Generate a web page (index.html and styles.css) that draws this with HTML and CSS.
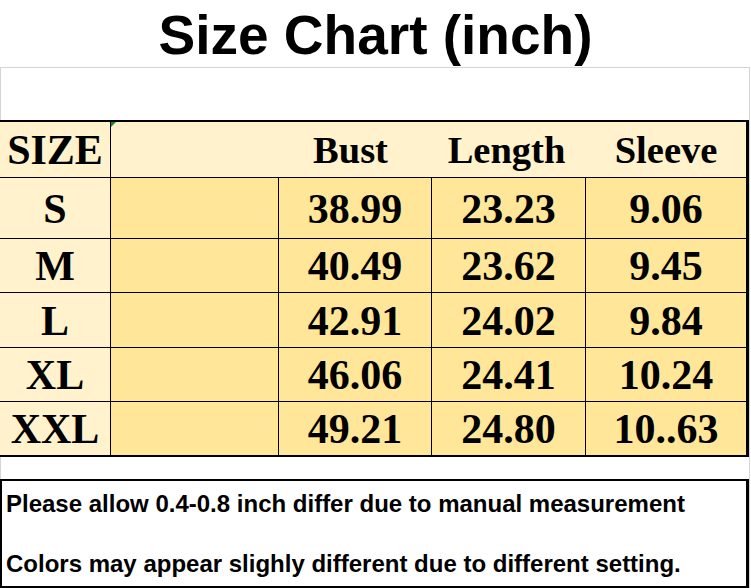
FILE: index.html
```html
<!DOCTYPE html>
<html>
<head>
<meta charset="utf-8">
<link rel="stylesheet" href="styles.css">
</head>
<body>
<h1 class="title">Size Chart (inch)</h1>
<div class="sheet">
  <div class="blank"></div>
  <div class="chart">
    <div class="c hd size-col">SIZE</div>
    <div class="c hd nb note-cell"><span class="flag"></span></div>
    <div class="c hd nb h-bust">Bust</div>
    <div class="c hd nb h-length">Length</div>
    <div class="c hd nb last">Sleeve</div>

    <div class="c size-col">S</div><div class="c d"></div><div class="c d">38.99</div><div class="c d">23.23</div><div class="c d last">9.06</div>
    <div class="c size-col">M</div><div class="c d"></div><div class="c d">40.49</div><div class="c d">23.62</div><div class="c d last">9.45</div>
    <div class="c size-col">L</div><div class="c d"></div><div class="c d">42.91</div><div class="c d">24.02</div><div class="c d last">9.84</div>
    <div class="c size-col">XL</div><div class="c d"></div><div class="c d">46.06</div><div class="c d">24.41</div><div class="c d last">10.24</div>
    <div class="c size-col br">XXL</div><div class="c d br"></div><div class="c d br">49.21</div><div class="c d br">24.80</div><div class="c d last br">10..63</div>
  </div>
  <div class="gap"></div>
  <div class="notes">
    <p class="n1">Please allow 0.4-0.8 inch differ due to manual measurement</p>
    <p class="n2">Colors may appear slighly different due to different setting.</p>
  </div>
</div>
</body>
</html>
```
FILE: styles.css
```css
html, body {
  margin: 0;
  padding: 0;
  background: #ffffff;
}
body {
  width: 751px;
  height: 588px;
  overflow: hidden;
}
.title {
  margin: 0;
  height: 67px;
  box-sizing: border-box;
  padding-top: 3px;
  line-height: 64px;
  font-family: "Liberation Sans", Arial, sans-serif;
  font-weight: bold;
  font-size: 55px;
  text-align: center;
  color: #000;
}
.sheet {
  width: 750px;
  box-sizing: border-box;
  border-top: 1px solid #d4d4d4;
  border-left: 1px solid #d4d4d4;
  border-right: 1px solid #d4d4d4;
}
.blank {
  height: 52px;
}
.chart {
  margin-left: -1px;
  width: 749px;
  box-sizing: border-box;
  border-top: 2px solid #000;
  border-right: 3px solid #000;
  border-bottom: 2px solid #000;
  display: grid;
  grid-template-columns: 111px 168px 153px 154px 160px;
  grid-template-rows: 56px 61px 54px 55px 54px 53px;
  font-family: "Liberation Serif", "Times New Roman", serif;
  font-weight: bold;
  color: #000;
}
.c {
  box-sizing: border-box;
  border-right: 1px solid #000;
  border-bottom: 1px solid #000;
  display: flex;
  align-items: center;
  justify-content: center;
  font-size: 42px;
  padding-top: 1px;
}
.c.last {
  border-right: none;
}
.c.br {
  border-bottom: none;
}
.hd {
  background: #fff2cc;
  font-size: 38.5px;
  padding-top: 0;
}
.hd.size-col {
  font-size: 42px;
}
.hd.nb {
  border-right: none;
}
.h-bust {
  padding-right: 10px;
}
.h-length {
  padding-right: 5px;
}
.size-col {
  background: #fff2cc;
}
.d {
  background: #ffe699;
}
.note-cell {
  position: relative;
}
.flag {
  position: absolute;
  left: 0;
  top: 0;
  width: 0;
  height: 0;
  border-top: 5px solid #1e8a2e;
  border-right: 5px solid transparent;
}
.gap {
  height: 22px;
}
.notes {
  margin-left: -1px;
  width: 749px;
  height: 109px;
  box-sizing: border-box;
  border: 2px solid #000;
  border-right-width: 3px;
  padding: 8px 4px 0 4px;
  font-family: "Liberation Sans", Arial, sans-serif;
  font-weight: bold;
  font-size: 24px;
  color: #000;
}
.notes p {
  margin: 0;
  line-height: 30px;
  white-space: nowrap;
}
.notes .n2 {
  margin-top: 30px;
}
```
